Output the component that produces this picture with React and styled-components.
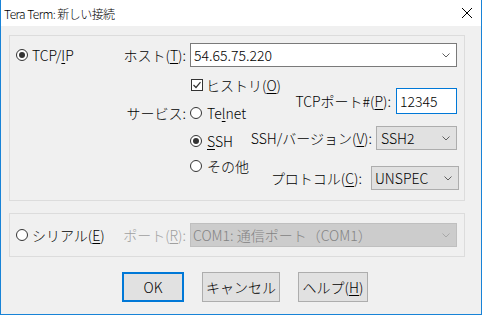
import React from "react";
import styled, { createGlobalStyle } from "styled-components";

const Global = createGlobalStyle`
  html, body { margin: 0; padding: 0; background: #ffffff; }
  body {
    font-family: "Noto Sans CJK JP", "Noto Sans", sans-serif;
    font-size: 14px;
    font-weight: 300;
    color: #000;
  }
  * { box-sizing: border-box; }
`;

const Window = styled.div`
  width: 482px;
  height: 315px;
  border: 1px solid #1883d7;
  border-top: none;
  display: flex;
  flex-direction: column;
  background: #f0f0f0;
`;

const TitleBar = styled.div`
  height: 26px;
  flex: none;
  background: #ffffff;
  display: flex;
  align-items: center;
  justify-content: space-between;
  padding: 0 9px 0 3px;
  font-size: 12px;
  letter-spacing: -0.55px;
`;

const Body = styled.div`
  flex: 1;
  display: flex;
  flex-direction: column;
  padding: 9px 16px 0 8px;
`;

const Group = styled.div`
  height: ${(p) => p.$h}px;
  margin-top: ${(p) => p.$mt || 0}px;
  border: 1px solid #dcdcdc;
  display: grid;
  grid-template-columns: 106px 68px 267px;
  padding-left: 6px;
  padding-top: ${(p) => p.$pt || 0}px;
  grid-template-rows: ${(p) => p.$rows};
  row-gap: ${(p) => p.$rg || 0}px;
  align-items: ${(p) => p.$align || "stretch"};
`;

const Option = styled.div`
  display: flex;
  align-items: center;
  gap: ${(p) => p.$gap || 5}px;
  white-space: nowrap;
  grid-column: ${(p) => p.$col || "auto"};
  grid-row: ${(p) => p.$row || "auto"};
  align-self: center;
`;

const FieldLabel = styled.div`
  display: flex;
  align-items: center;
  justify-content: flex-end;
  padding-right: 4px;
  white-space: nowrap;
  color: ${(p) => (p.$disabled ? "#a0a0a0" : "#000")};
  height: ${(p) => (p.$h ? p.$h + "px" : "auto")};
  margin-top: ${(p) => p.$mt || 0}px;
  align-self: ${(p) => (p.$h ? "start" : "center")};
`;

const Mn = styled.span`
  text-decoration: underline;
  text-decoration-thickness: 1px;
  text-underline-offset: 2px;
`;

const Combo = styled.div`
  width: ${(p) => p.$w}px;
  height: ${(p) => p.$h || 24}px;
  display: flex;
  align-items: center;
  justify-content: space-between;
  padding: 0 ${(p) => p.$pr || 6}px 0 ${(p) => p.$pl || 3}px;
  background: ${(p) =>
    p.$variant === "edit" ? "#ffffff" : p.$variant === "disabled" ? "#cccccc" : "#e1e1e1"};
  border: 1px solid
    ${(p) =>
      p.$variant === "edit" ? "#7a7a7a" : p.$variant === "disabled" ? "#bfbfbf" : "#adadad"};
  color: ${(p) => (p.$variant === "disabled" ? "#838383" : "#000")};
  white-space: nowrap;
`;

const TextBox = styled.div`
  width: 61px;
  height: 26px;
  background: #ffffff;
  border: 1px solid #0078d7;
  display: flex;
  align-items: center;
  padding-left: 3px;
`;

const ServiceGrid = styled.div`
  grid-column: 3;
  grid-row: 2;
  display: grid;
  grid-template-columns: auto 1fr;
  grid-template-rows: 28px 28px 28px 22px 14px;
`;

const SettingRow = styled.div`
  grid-column: 1 / 3;
  grid-row: ${(p) => p.$row};
  justify-self: end;
  align-self: start;
  margin-top: ${(p) => p.$mt}px;
  margin-right: ${(p) => p.$mr || 0}px;
  display: flex;
  align-items: center;
  gap: ${(p) => p.$gap}px;
  white-space: nowrap;
`;

const ButtonRow = styled.div`
  display: flex;
  gap: 18px;
  margin-top: 15px;
  padding-left: 113px;
`;

const Button = styled.div`
  width: ${(p) => p.$w}px;
  height: 30px;
  display: flex;
  align-items: center;
  justify-content: center;
  background: #e1e1e1;
  border: ${(p) => (p.$primary ? "2px solid #0078d7" : "1px solid #adadad")};
  white-space: nowrap;
`;

const RadioIcon = ({ checked }) => (
  <svg width="12" height="12" viewBox="0 0 12 12" style={{ flex: "none" }}>
    <circle cx="6" cy="6" r="5.5" fill="#fff" stroke="#333" strokeWidth="1" />
    {checked && <circle cx="6" cy="6" r="3" fill="#333" />}
  </svg>
);

const CheckIcon = () => (
  <svg width="12" height="12" viewBox="0 0 12 12" style={{ flex: "none" }}>
    <rect x="0.5" y="0.5" width="11" height="11" fill="#fff" stroke="#333" />
    <path d="M2.5 6 L5 8.5 L9.5 3.2" fill="none" stroke="#333" strokeWidth="1.2" />
  </svg>
);

const Chevron = ({ color = "#606060" }) => (
  <svg width="8" height="5" viewBox="0 0 8 5" style={{ flex: "none" }}>
    <path d="M0.5 0.5 L4 4 L7.5 0.5" fill="none" stroke={color} strokeWidth="1" />
  </svg>
);

const CloseIcon = () => (
  <svg width="10" height="10" viewBox="0 0 10 10">
    <path d="M0 0 L10 10 M10 0 L0 10" stroke="#000" strokeWidth="1" />
  </svg>
);

export default function App() {
  return (
    <>
      <Global />
      <Window>
        <TitleBar>
          <span>Tera Term: 新しい接続</span>
          <CloseIcon />
        </TitleBar>
        <Body>
          <Group $h={166} $pt={7} $rows="24px auto" $rg={4}>
            <Option $gap={4} $col="1" $row="1">
              <RadioIcon checked />
              <span>
                TCP/<Mn>I</Mn>P
              </span>
            </Option>
            <FieldLabel>
              ホスト(<Mn>T</Mn>):
            </FieldLabel>
            <Combo $w={267} $variant="edit">
              <span>54.65.75.220</span>
              <Chevron />
            </Combo>
            <FieldLabel $h={28} $mt={28} style={{ gridColumn: 2, gridRow: 2 }}>
              サービス:
            </FieldLabel>
            <ServiceGrid>
              <Option $col="1" $row="1" $gap={3} style={{ marginLeft: 1 }}>
                <CheckIcon />
                <span>
                  ヒストリ(<Mn>O</Mn>)
                </span>
              </Option>
              <Option $col="1" $row="2">
                <RadioIcon />
                <span>
                  Te<Mn>l</Mn>net
                </span>
              </Option>
              <Option $col="1" $row="3">
                <RadioIcon checked />
                <span>
                  <Mn>S</Mn>SH
                </span>
              </Option>
              <Option $col="1" $row="4">
                <RadioIcon />
                <span>その他</span>
              </Option>
              <SettingRow $row="1 / 3" $mt={17} $gap={5}>
                <span>
                  TCPポート#(<Mn>P</Mn>):
                </span>
                <TextBox>12345</TextBox>
              </SettingRow>
              <SettingRow $row="3" $mt={-1} $gap={4}>
                <span>
                  SSH/バージョン(<Mn>V</Mn>):
                </span>
                <Combo $w={81} $pl={4}>
                  <span>SSH2</span>
                  <Chevron />
                </Combo>
              </SettingRow>
              <SettingRow $row="4 / 6" $mt={11} $mr={-2} $gap={9}>
                <span>
                  プロトコル(<Mn>C</Mn>):
                </span>
                <Combo $w={88} $h={24}>
                  <span>UNSPEC</span>
                  <Chevron />
                </Combo>
              </SettingRow>
            </ServiceGrid>
          </Group>

          <Group $h={44} $mt={12} $rows="1fr" $align="center">
            <Option $gap={4}>
              <RadioIcon />
              <span>
                シリアル(<Mn>E</Mn>)
              </span>
            </Option>
            <FieldLabel $disabled>
              ポート(<Mn>R</Mn>):
            </FieldLabel>
            <Combo $w={267} $variant="disabled" $pl={2}>
              <span>COM1: 通信ポート（COM1）</span>
              <Chevron color="#a8a8a8" />
            </Combo>
          </Group>

          <ButtonRow>
            <Button $w={62} $primary>
              OK
            </Button>
            <Button $w={78}>キャンセル</Button>
            <Button $w={70}>
              ヘルプ(<Mn>H</Mn>)
            </Button>
          </ButtonRow>
        </Body>
      </Window>
    </>
  );
}
